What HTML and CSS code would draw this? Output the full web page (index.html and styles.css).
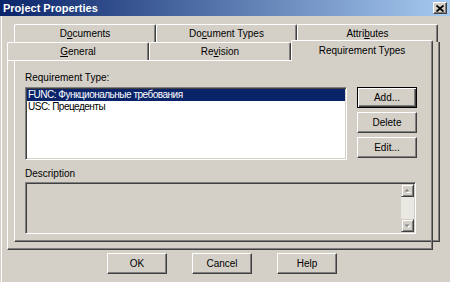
FILE: index.html
```html
<!DOCTYPE html>
<html>
<head>
<meta charset="utf-8">
<link rel="stylesheet" href="styles.css">
</head>
<body>
<div class="window">
  <div class="titlebar">
    <span class="title">Project Properties</span>
    <span class="close"><svg width="8" height="7" viewBox="0 0 8 7"><path d="M0.5 0.5 L7.5 6.5 M7.5 0.5 L0.5 6.5" stroke="#000" stroke-width="1.8" fill="none"/></svg></span>
  </div>
  <div class="client">
    <div class="back-page">
      <div class="tabs back-tabs">
        <div class="tab w142">D<u>o</u>cuments</div>
        <div class="tab w141">Do<u>c</u>ument Types</div>
        <div class="tab w141">Attri<u>b</u>utes</div>
      </div>
      <div class="back-panel"></div>
    </div>
    <div class="front-page">
      <div class="tabs front-tabs">
        <div class="tab w142"><u>G</u>eneral</div>
        <div class="tab w142">Re<u>v</u>ision</div>
        <div class="tab w142 selected">Requirement Types</div>
      </div>
      <div class="panel">
        <div class="label">Requirement Type:</div>
        <div class="req-row">
          <div class="listbox">
            <div class="item selected">FUNC: Функциональные требования</div>
            <div class="item">USC: Прецеденты</div>
          </div>
          <div class="side-buttons">
            <button class="btn default">Add...</button>
            <button class="btn">Delete</button>
            <button class="btn">Edit...</button>
          </div>
        </div>
        <div class="label desc-label">Description</div>
        <div class="desc-box">
          <div class="scrollbar">
            <div class="sb-btn"><svg width="7" height="5" viewBox="0 0 7 5"><polygon points="1,4 6,4 3.5,1.5" fill="#fff" transform="translate(1,1)"/><polygon points="0.5,3.5 5.5,3.5 3,1" fill="#808080"/></svg></div>
            <div class="sb-track"></div>
            <div class="sb-btn"><svg width="7" height="5" viewBox="0 0 7 5"><polygon points="1,2 6,2 3.5,4.5" fill="#fff" transform="translate(1,0.5)"/><polygon points="0.5,1.5 5.5,1.5 3,4" fill="#808080"/></svg></div>
          </div>
        </div>
      </div>
    </div>
    <div class="footer">
      <button class="btn">OK</button>
      <button class="btn">Cancel</button>
      <button class="btn">Help</button>
    </div>
  </div>
</div>
</body>
</html>
```
FILE: styles.css
```css
* { box-sizing: border-box; }
html, body { margin: 0; padding: 0; }
body {
  width: 450px;
  height: 282px;
  overflow: hidden;
  background: #d4d0c8;
  font-family: "Liberation Sans", Arial, sans-serif;
  font-size: 10px;
  color: #000;
}
.window {
  width: 450px;
  height: 282px;
  box-shadow: inset 1px 0 0 #d4d0c8, inset 2px 0 0 #fff;
}
.titlebar {
  height: 16px;
  background: linear-gradient(to right, #0a246a, #a6caf0);
  display: flex;
  align-items: center;
  justify-content: space-between;
  padding: 0 3px 0 3px;
}
.title {
  color: #fff;
  font-weight: bold;
  font-size: 11px;
  line-height: 16px;
}
.close {
  width: 14px;
  height: 12px;
  background: #d4d0c8;
  border: 1px solid;
  border-color: #fff #404040 #404040 #fff;
  box-shadow: inset -1px -1px #808080;
  display: flex;
  align-items: center;
  justify-content: center;
}
.close svg { display: block; }
.client {
  position: relative;
  height: 266px;
}
.back-page {
  position: absolute;
  left: 14px;
  top: 8px;
  width: 426px;
  height: 218px;
}
.tabs { display: flex; }
.back-tabs { height: 18px; }
.tab {
  height: 18px;
  background: #d4d0c8;
  border-top: 1px solid #fff;
  border-left: 1px solid #fff;
  border-right: 1px solid #404040;
  box-shadow: inset -1px 0 #808080;
  border-radius: 2px 2px 0 0;
  text-align: center;
  line-height: 17px;
  white-space: nowrap;
}
.w141 { width: 141px; }
.w142 { width: 142px; }
.back-panel {
  height: 200px;
  border-right: 1px solid #404040;
  border-bottom: 1px solid #404040;
  border-left: 1px solid #fff;
  box-shadow: inset -1px -1px #808080;
}
.front-page {
  position: relative;
  margin-left: 7px;
  width: 426px;
  padding-top: 24px;
}
.front-tabs {
  height: 20px;
  align-items: flex-end;
}
.front-tabs .tab { line-height: 18px; }
.front-tabs .tab.selected {
  position: relative;
  z-index: 1;
  height: 21px;
  margin-bottom: -1px;
  line-height: 20px;
}
.panel {
  height: 190px;
  border: 1px solid;
  border-color: #fff #404040 #404040 #fff;
  box-shadow: inset -1px -1px #808080;
  padding: 10px 0 0 17px;
}
.label {
  line-height: 13px;
  height: 13px;
  margin-bottom: 3px;
}
.req-row {
  display: flex;
  gap: 10px;
  height: 73px;
}
.listbox {
  width: 322px;
  height: 73px;
  background: #fff;
  border: 1px solid;
  border-color: #808080 #fff #fff #808080;
  box-shadow: inset 1px 1px #404040, inset -1px -1px #d4d0c8;
  padding: 1px;
}
.item {
  height: 12px;
  line-height: 12px;
  padding-left: 1px;
  white-space: nowrap;
  letter-spacing: -0.5px;
}
.item.selected {
  background: #0a246a;
  color: #fff;
}
.side-buttons {
  display: flex;
  flex-direction: column;
  gap: 4px;
}
.btn {
  width: 60px;
  height: 21px;
  padding: 0;
  font-family: inherit;
  font-size: 10px;
  color: #000;
  background: #d4d0c8;
  border: 1px solid;
  border-color: #fff #404040 #404040 #fff;
  box-shadow: inset -1px -1px #808080;
}
.btn.default {
  border-color: #000;
  box-shadow: inset 1px 1px #fff, inset -1px -1px #404040, inset -2px -2px #808080;
}
.desc-label {
  margin-top: 7px;
  margin-bottom: 2px;
}
.desc-box {
  width: 391px;
  height: 52px;
  border: 1px solid;
  border-color: #808080 #fff #fff #808080;
  box-shadow: inset 1px 1px #404040, inset -1px -1px #d4d0c8;
  padding: 1px;
  display: flex;
  justify-content: flex-end;
}
.scrollbar {
  width: 13px;
  display: flex;
  flex-direction: column;
}
.sb-btn {
  height: 13px;
  background: #d4d0c8;
  border: 1px solid;
  border-color: #d4d0c8 #404040 #404040 #d4d0c8;
  box-shadow: inset 1px 1px #fff, inset -1px -1px #808080;
  display: flex;
  align-items: center;
  justify-content: center;
}
.sb-btn svg { display: block; }
.sb-track {
  flex: 1;
  background: #eae8e2;
}
.footer {
  display: flex;
  gap: 25px;
  padding-left: 107px;
  margin-top: 3px;
}
```
